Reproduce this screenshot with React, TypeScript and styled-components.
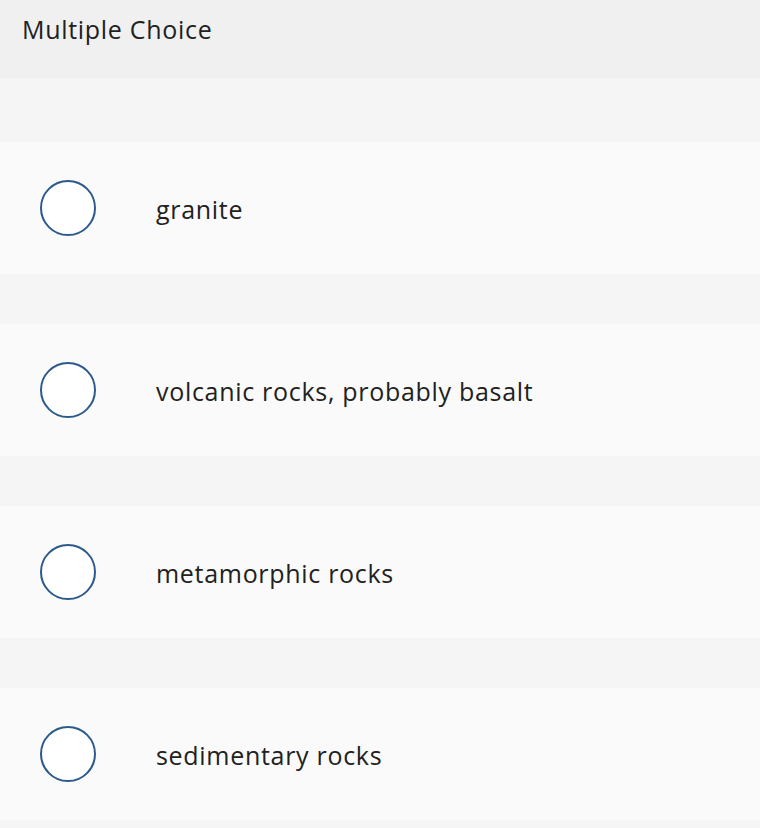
import * as React from 'react';
import styled, { createGlobalStyle } from 'styled-components';

const GlobalStyle = createGlobalStyle`
    html, body {
        margin: 0;
        padding: 0;
        background: #f5f5f5;
    }
    body {
        font-family: "Open Sans", Lato, Arial, sans-serif;
        color: #212121;
    }
`;

const options = [
    'granite',
    'volcanic rocks, probably basalt',
    'metamorphic rocks',
    'sedimentary rocks'
];

export default function App() {
    return <SPage>
        <GlobalStyle />
        <SHeader>Multiple Choice</SHeader>
        <SList>
            {options.map(text => <SOption key={text}>
                <SRadio />
                <SLabel>{text}</SLabel>
            </SOption>)}
        </SList>
    </SPage>;
};

const SPage = styled.div`
    width: 760px;
    min-height: 828px;
    background: #f5f5f5;
`;

const SHeader = styled.div`
    height: 78px;
    box-sizing: border-box;
    padding: 13px 0 0 22px;
    background: #f0f0f0;
    font-size: 25px;
    line-height: 32px;
    letter-spacing: 0.7px;
`;

const SList = styled.div`
    display: flex;
    flex-direction: column;
    gap: 50px;
    padding: 64px 0 8px;
`;

const SOption = styled.div`
    display: flex;
    align-items: center;
    height: 132px;
    padding-left: 40px;
    box-sizing: border-box;
    background: #fafafa;
`;

const SRadio = styled.div`
    flex: 0 0 auto;
    width: 56px;
    height: 56px;
    box-sizing: border-box;
    border: 2px solid #2c5a8c;
    border-radius: 50%;
    background: #fff;
    margin-right: 60px;
`;

const SLabel = styled.div`
    font-size: 25px;
    line-height: 32px;
    letter-spacing: 0.7px;
    padding-top: 2px;
`;
